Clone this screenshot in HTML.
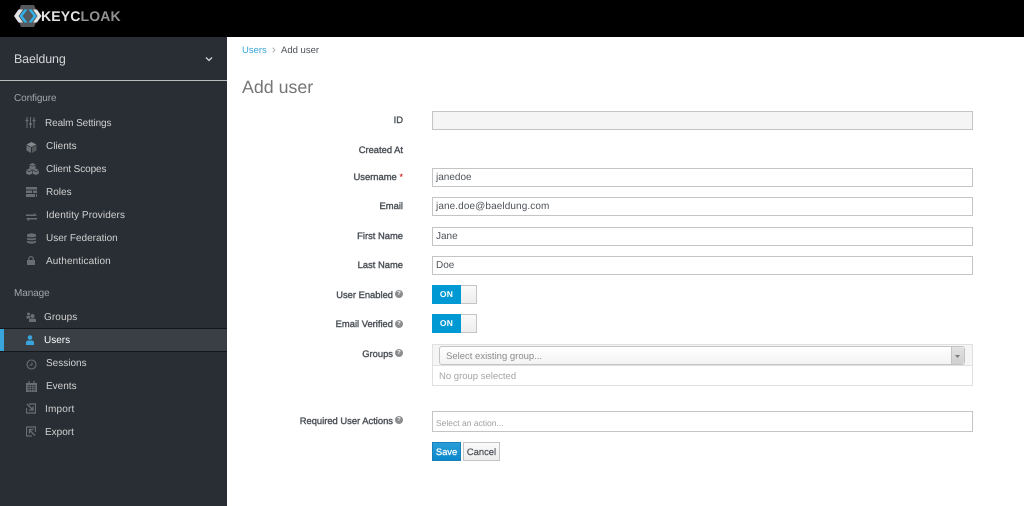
<!DOCTYPE html>
<html><head><meta charset="utf-8"><style>
*{box-sizing:border-box}
html,body{margin:0;padding:0;width:1024px;height:506px;overflow:hidden;background:#fff;font-family:"Liberation Sans",sans-serif;font-size:9.5px;color:#363636;text-rendering:geometricPrecision}
#w{position:absolute;left:0;top:0;width:1024px;height:506px;filter:blur(.3px);overflow:hidden}
.a{position:absolute;white-space:nowrap}
#top{position:absolute;left:0;top:0;width:1024px;height:37px;background:#000}
#side{position:absolute;left:0;top:37px;width:227px;height:469px;background:#292e34}
.n{position:absolute;white-space:nowrap;color:#d1d1d1;font-size:10px;line-height:14px}
.h{position:absolute;white-space:nowrap;color:#a3a5a8;font-size:10px;line-height:14px}
.ic{position:absolute}
.l{position:absolute;white-space:nowrap;font-size:9.4px;line-height:12px;color:#4d5258;-webkit-text-stroke:.4px #4d5258;text-align:right;right:621px}
.i{position:absolute;left:432px;width:541px;height:19px;border:1px solid #c4c4c4;background:#fff;font-size:10px;line-height:17px;padding-left:3px;color:#4d5258}
.q{position:absolute;width:8px;height:8px;border-radius:50%;background:#8b8d8f;color:#fff;font-size:6px;line-height:8px;text-align:center;font-weight:bold}
.sw{position:absolute;left:432px;width:45px;height:19px;border:1px solid #c4c4c4;background:linear-gradient(#fafafa,#ededed)}
.sw b{position:absolute;left:-1px;top:-1px;width:29px;height:19px;background:#0099d3;color:#fff;font-size:8.5px;line-height:19px;text-align:center;letter-spacing:.2px}
</style></head><body><div id="w">
<div id="top"></div>
<svg class="ic" style="left:14px;top:5px" width="28" height="22" viewBox="0 0 28 22">
<path d="M7 0H20L25 11 20 22H7L3 11Z" fill="#55585c"/>
<path d="M0 11L4.500 4.500H9L4.500 11 9 17.500H4.500Z" fill="#e4e4e4"/>
<path d="M5.500 11L10.500 4.500H13.500L8.500 11 13.500 17.500H10.500Z" fill="#2fb4ee"/>
<path d="M22.500 11L17.500 4.500H14.500L19.500 11 14.500 17.500H17.500Z" fill="#2fb4ee"/>
<path d="M27.500 11L23 4.500H19L23.500 11 19 17.500H23Z" fill="#e4e4e4"/>
</svg>
<div class="a" style="left:41px;top:7px;font-size:14px;line-height:18px;font-weight:bold;letter-spacing:.15px"><span style="color:#e4e4e4">KEYC</span><span style="color:#8f9193">LOAK</span></div>
<div id="side"></div>
<div class="a" style="left:14px;top:51px;font-size:12.5px;line-height:16px;color:#d4d5d6;letter-spacing:-.15px">Baeldung</div>
<svg class="ic" style="left:205px;top:56px" width="8" height="6"><path d="M1 1.500L4 4.500 7 1.500" fill="none" stroke="#d4d5d6" stroke-width="1.300"/></svg>
<div class="a" style="left:0;top:80px;width:227px;height:1px;background:#b8babc"></div>
<div class="h" style="left:14px;top:92px;letter-spacing:-.1px">Configure</div>
<div class="n" style="left:45px;top:117px;letter-spacing:-.1px">Realm Settings</div>
<div class="n" style="left:46px;top:140px">Clients</div>
<div class="n" style="left:46px;top:163px;letter-spacing:-.1px">Client Scopes</div>
<div class="n" style="left:46px;top:186px">Roles</div>
<div class="n" style="left:46px;top:209px;letter-spacing:.1px">Identity Providers</div>
<div class="n" style="left:46px;top:232px">User Federation</div>
<div class="n" style="left:46px;top:255px;letter-spacing:.1px">Authentication</div>
<div class="h" style="left:14px;top:287px;letter-spacing:-.1px">Manage</div>
<div class="n" style="left:44px;top:311px;letter-spacing:.1px">Groups</div>
<div class="a" style="left:0;top:328px;width:227px;height:24px;background:#393f44;border-top:1px solid #15181b;border-bottom:1px solid #15181b"></div>
<div class="a" style="left:0;top:329px;width:4px;height:22px;background:#39a5dc"></div>
<div class="n" style="left:44px;top:334px;color:#fff">Users</div>
<div class="n" style="left:46px;top:357px">Sessions</div>
<div class="n" style="left:46px;top:380px">Events</div>
<div class="n" style="left:45px;top:403px;letter-spacing:.2px">Import</div>
<div class="n" style="left:45px;top:426px">Export</div>

<svg class="ic" style="left:25px;top:117px" width="11" height="11" fill="none" stroke="#6a6e73"><path d="M2 0V11M5.500 0V11M9 0V11" stroke-width="1"/><path d="M.5 3.500H3.500M4 7H7M7.500 3.500H10.500" stroke-width="1.500"/></svg>
<svg class="ic" style="left:26px;top:142px" width="11" height="11"><path d="M5.500 0L10.500 2.500 5.500 5 .5 2.500Z" fill="#85888b"/><path d="M.5 3.200L5 5.500V11L.5 8.500Z" fill="#6a6e73"/><path d="M10.500 3.200L6 5.500V11L10.500 8.500Z" fill="#55595d"/></svg>
<svg class="ic" style="left:26px;top:163px" width="13" height="12" fill="#6f7377"><path d="M6.500 0L9.500 1.500V5.500L6.500 6.800 3.500 5.500V1.500Z"/><path d="M3.200 5.500L6.200 7V10.700L3.200 12 .2 10.700V7Z"/><path d="M9.800 5.500L12.800 7V10.700L9.800 12 6.800 10.700V7Z"/><path d="M3.500 2L6.500 3.300 9.500 2M.5 7.300L3.200 8.500 6 7.300M7 7.300L9.800 8.500 12.500 7.300" fill="none" stroke="#292e34" stroke-width=".6"/></svg>
<svg class="ic" style="left:26px;top:187px" width="11" height="10" fill="#6a6e73"><path d="M0 0H11V2.500H0ZM0 3.500H6V6H0ZM7 3.500H11V6H7ZM0 7H9V10H0ZM10 7H11V10H10Z"/></svg>
<svg class="ic" style="left:26px;top:213px" width="11" height="8" fill="#6a6e73"><path d="M0 1.500H8V0L11 2.500 8 3V3H0ZM11 5H3V4.500L0 5.800 3 8V6.500H11Z"/></svg>
<svg class="ic" style="left:27px;top:233px" width="9" height="11" fill="#6a6e73"><path d="M0 1.500Q4.500-.8 9 1.500V3.500Q4.500 5.300 0 3.500ZM0 4.700Q4.500 6.300 9 4.700V6.500Q4.500 8 0 6.500ZM0 7.700Q4.500 9.300 9 7.700V9.500Q4.500 11.700 0 9.500Z"/></svg>
<svg class="ic" style="left:27px;top:256px" width="8" height="9"><path d="M1.800 4V2.800A2.200 2.200 0 0 1 6.200 2.800V4" fill="none" stroke="#6a6e73" stroke-width="1.200"/><rect y="4" width="8" height="5" rx=".5" fill="#6a6e73"/></svg>
<svg class="ic" style="left:26px;top:312px" width="10" height="10" fill="#6a6e73"><circle cx="2.500" cy="2" r="1.500"/><path d="M.5 4H4V6.500H.5Z"/><circle cx="6.500" cy="4" r="2"/><path d="M3 10V7.500Q3.500 6.500 5 6.500H8Q10 6.500 10 8V10Z"/></svg>
<svg class="ic" style="left:26px;top:335px" width="8" height="10" fill="#39a5dc"><circle cx="4" cy="2.500" r="2.300"/><path d="M0 10V7.500Q.3 5.500 2 5.500H6Q7.700 5.500 8 7.500V10Z"/></svg>
<svg class="ic" style="left:26px;top:359px" width="11" height="11" fill="none" stroke="#6a6e73"><circle cx="5.500" cy="5.500" r="4.500" stroke-width="1.100"/><path d="M6 3V6H3.500" stroke-width=".9"/></svg>
<svg class="ic" style="left:26px;top:381px" width="11" height="11"><path d="M0 2H11V11H0Z" fill="#6a6e73"/><path d="M3 0V3M8 0V3" stroke="#6a6e73" stroke-width="1.200"/><path d="M1 4.500H10M1 6.500H10M1 8.500H10M3 4V10.500M5.500 4V10.500M8 4V10.500" stroke="#292e34" stroke-width=".6"/></svg>
<svg class="ic" style="left:26px;top:403px" width="10" height="11" fill="none" stroke="#6a6e73"><path d="M3 1H9.500V10H.5V5" stroke-width="1.200"/><path d="M1 1L6.500 6.500M3 7H7V3.500" stroke-width="1.300"/></svg>
<svg class="ic" style="left:26px;top:426px" width="10" height="11" fill="none" stroke="#6a6e73"><path d="M9.500 6V1H.5V10H6" stroke-width="1.200"/><path d="M3.500 4L9 9.500M3.500 7.500V3.500H7.500" stroke-width="1.300"/></svg>

<div class="a" style="left:242px;top:44.500px;font-size:9.500px;line-height:12px;color:#39a5dc">Users</div>
<svg class="ic" style="left:272px;top:47px" width="4" height="6"><path d="M.7.7L3 3 .7 5.300" fill="none" stroke="#aaa" stroke-width=".9"/></svg>
<div class="a" style="left:281px;top:44.500px;font-size:9.500px;line-height:12px;color:#4d5258">Add user</div>
<div class="a" style="left:242px;top:76px;font-size:17.800px;line-height:22px;color:#767676">Add user</div>

<div class="l" style="top:114px">ID</div>
<div class="i" style="top:111px;background:#f5f5f5"></div>
<div class="l" style="top:144px">Created At</div>
<div class="l" style="top:171px">Username <span style="color:#c00;-webkit-text-stroke:0">*</span></div>
<div class="i" style="top:168px">janedoe</div>
<div class="l" style="top:200px">Email</div>
<div class="i" style="top:197px;letter-spacing:.1px">jane.doe@baeldung.com</div>
<div class="l" style="top:230px">First Name</div>
<div class="i" style="top:227px">Jane</div>
<div class="l" style="top:259px">Last Name</div>
<div class="i" style="top:256px">Doe</div>

<div class="l" style="top:289px;right:631px">User Enabled</div><div class="q" style="left:395px;top:290px">?</div>
<div class="sw" style="top:285px"><b>ON</b></div>
<div class="l" style="top:318px;right:631px">Email Verified</div><div class="q" style="left:395px;top:320px">?</div>
<div class="sw" style="top:314px"><b>ON</b></div>
<div class="l" style="top:348px;right:631px">Groups</div><div class="q" style="left:395px;top:349px">?</div>

<div class="a" style="left:432px;top:344px;width:541px;height:42px;border:1px solid #e0e0e0;background:#fff"></div>
<div class="a" style="left:433px;top:345px;width:539px;height:21px;background:#f5f5f5;border-bottom:1px solid #e0e0e0"></div>
<div class="a" style="left:439px;top:346px;width:526px;height:19px;border:1px solid #c4c4c4;border-radius:3px;background:linear-gradient(#fff,#f3f3f3);font-size:9.500px;line-height:19px;padding-left:6px;color:#8b8d8f">Select existing group...</div>
<div class="a" style="left:951px;top:347px;width:13px;height:17px;background:linear-gradient(#e2e2e2,#cfcfcf);border-left:1px solid #c4c4c4;border-radius:0 3px 3px 0"></div>
<svg class="ic" style="left:955px;top:355px" width="5" height="3"><path d="M0 0H5L2.500 3Z" fill="#7a7a7a"/></svg>
<div class="a" style="left:439px;top:371px;font-size:9.500px;line-height:12px;color:#a3a5a8">No group selected</div>

<div class="l" style="top:415px;right:631px">Required User Actions</div><div class="q" style="left:395px;top:416px">?</div>
<div class="i" style="top:411px;height:21px;font-size:8.500px;line-height:22px;color:#a0a0a0;padding-left:3px">Select an action...</div>

<div class="a" style="left:432px;top:442px;width:29px;height:19px;background:linear-gradient(#2a9fd8,#0a88cc);border:1px solid #1a7fb8;color:#fff;-webkit-text-stroke:.25px #fff;font-size:9.400px;line-height:17px;text-align:center">Save</div>
<div class="a" style="left:463px;top:442px;width:37px;height:19px;background:linear-gradient(#fafafa,#ededed);border:1px solid #c4c4c4;color:#4d5258;-webkit-text-stroke:.25px #4d5258;font-size:9.400px;line-height:17px;text-align:center">Cancel</div>
</div></body></html>
